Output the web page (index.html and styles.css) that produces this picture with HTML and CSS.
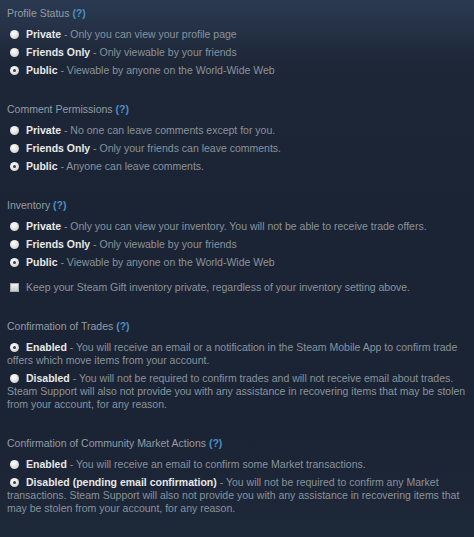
FILE: index.html
```html
<!DOCTYPE html>
<html lang="en">
<head>
  <meta charset="UTF-8" />
  <title>Privacy Settings</title>
  <link rel="stylesheet" href="styles.css">
</head>
<body>
  <div class="settings">
    <div class="section">
      <div class="section-title">Profile Status <a class="help">(?)</a></div>
      <p class="option"><span class="radio"></span><b>Private</b> - Only you can view your profile page</p>
      <p class="option"><span class="radio"></span><b>Friends Only</b> - Only viewable by your friends</p>
      <p class="option"><span class="radio checked"></span><b>Public</b> - Viewable by anyone on the World-Wide Web</p>
    </div>

    <div class="section">
      <div class="section-title">Comment Permissions <a class="help">(?)</a></div>
      <p class="option"><span class="radio"></span><b>Private</b> - No one can leave comments except for you.</p>
      <p class="option"><span class="radio"></span><b>Friends Only</b> - Only your friends can leave comments.</p>
      <p class="option"><span class="radio checked"></span><b>Public</b> - Anyone can leave comments.</p>
    </div>

    <div class="section">
      <div class="section-title">Inventory <a class="help">(?)</a></div>
      <p class="option"><span class="radio"></span><b>Private</b> - Only you can view your inventory. You will not be able to receive trade offers.</p>
      <p class="option"><span class="radio"></span><b>Friends Only</b> - Only viewable by your friends</p>
      <p class="option"><span class="radio checked"></span><b>Public</b> - Viewable by anyone on the World-Wide Web</p>
      <p class="option gift"><span class="checkbox"></span>Keep your Steam Gift inventory private, regardless of your inventory setting above.</p>
    </div>

    <div class="section">
      <div class="section-title">Confirmation of Trades <a class="help">(?)</a></div>
      <p class="option"><span class="radio checked"></span><b>Enabled</b> - You will receive an email or a notification in the Steam Mobile App to confirm trade offers which move items from your account.</p>
      <p class="option"><span class="radio"></span><b>Disabled</b> - You will not be required to confirm trades and will not receive email about trades. Steam Support will also not provide you with any assistance in recovering items that may be stolen from your account, for any reason.</p>
    </div>

    <div class="section">
      <div class="section-title">Confirmation of Community Market Actions <a class="help">(?)</a></div>
      <p class="option"><span class="radio"></span><b>Enabled</b> - You will receive an email to confirm some Market transactions.</p>
      <p class="option"><span class="radio checked"></span><b>Disabled (pending email confirmation)</b> - You will not be required to confirm any Market transactions. Steam Support will also not provide you with any assistance in recovering items that may be stolen from your account, for any reason.</p>
    </div>
  </div>
</body>
</html>
```

FILE: styles.css
```css
html {
  background: #1b2434;
}

body {
  margin: 0;
  min-height: 537px;
  font-family: 'Liberation Sans', Arial, sans-serif;
  font-size: 10.5px;
  line-height: 13px;
  color: #8a939c;
  background: linear-gradient(to bottom, #2b3a52 0px, #1d2738 60px, #1b2434 200px, #1b2434 440px, #1d2839 537px);
}

.settings {
  padding: 7px 7px 0 7px;
}

.section {
  margin-bottom: 26px;
}

.section-title {
  color: #949ca4;
  margin-bottom: 8px;
}

.help {
  color: #4c8fc6;
  font-weight: bold;
}

.option {
  margin: 0 0 5px 0;
}

.option b {
  color: #e8e8e8;
}

.gift {
  margin-top: 12px;
}

.radio {
  display: inline-block;
  box-sizing: border-box;
  width: 9px;
  height: 9px;
  margin: 0 7px 0 3px;
  border-radius: 50%;
  background: radial-gradient(circle at 40% 35%, #ffffff 0%, #e6e6e6 45%, #bdbdbd 100%);
  vertical-align: -1px;
  position: relative;
}

.radio.checked::after {
  content: "";
  position: absolute;
  left: 3px;
  top: 3px;
  width: 3px;
  height: 3px;
  border-radius: 50%;
  background: #3a3f47;
}

.checkbox {
  display: inline-block;
  box-sizing: border-box;
  width: 9px;
  height: 9px;
  margin: 0 7px 0 3px;
  background: linear-gradient(#f2f2f2, #c9c9c9);
  border: 1px solid #a8adb3;
  vertical-align: -1px;
}
```
